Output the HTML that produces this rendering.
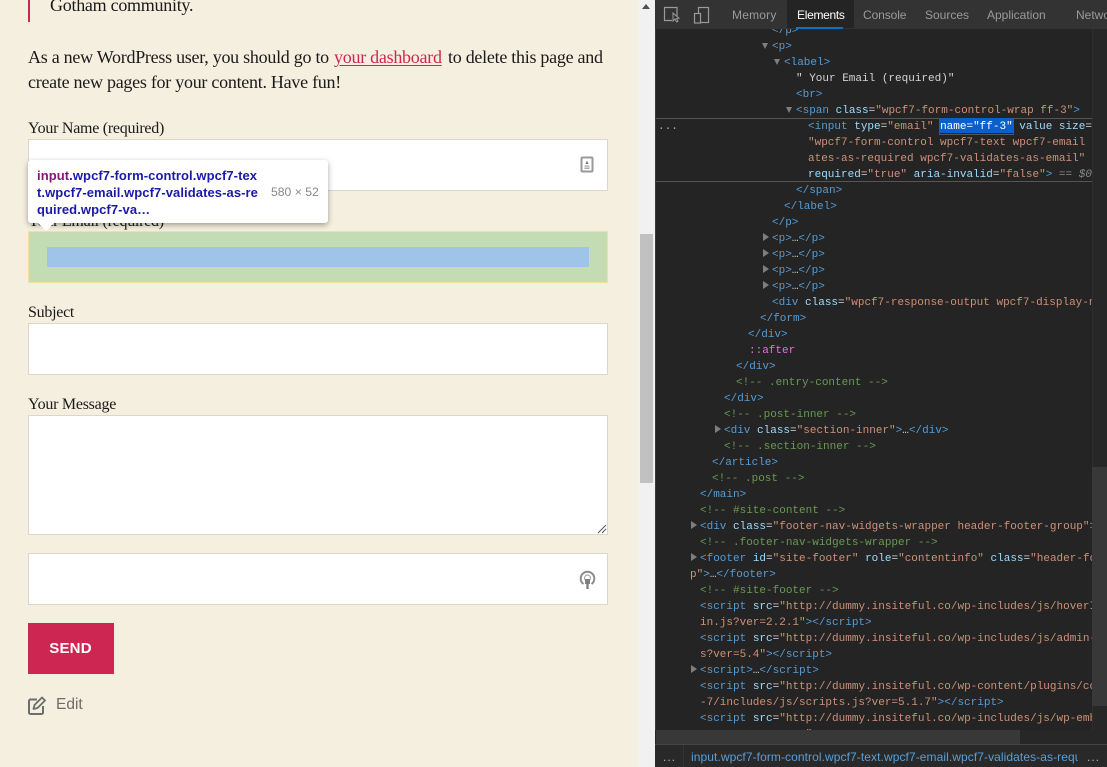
<!DOCTYPE html>
<html><head><meta charset="utf-8"><style>
html,body{margin:0;padding:0;width:1107px;height:767px;overflow:hidden;background:#f5efe0}
.a{position:absolute;white-space:pre}
.s{font-family:"Liberation Serif",serif;color:#1a1a1a;font-size:18px;line-height:24px;letter-spacing:-.27px}
.l{font-size:16px;line-height:20px;letter-spacing:-.27px}
.i{position:absolute;left:28px;width:578px;background:#fff;border:1px solid #dcd7ca}
#dt{position:absolute;left:655px;top:0;width:452px;height:767px;background:#242424;overflow:hidden}
#code{position:absolute;left:0;top:1px;width:437px;height:729px;overflow:hidden;font-family:"Liberation Mono",monospace;font-size:11px;color:#d4d4d4}
#code div{position:absolute;white-space:pre;height:16px;line-height:16px}
b{font-weight:normal}
.t{color:#569cd6}.n{color:#9cdcfe}.v{color:#ce9178}.c{color:#6a9955}
.r{position:absolute;width:0;height:0;margin-top:-1px;border-top:4px solid transparent;border-bottom:4px solid transparent;border-left:6px solid #7f7f7f}
.d{position:absolute;width:0;height:0;margin-top:-1px;border-left:3.5px solid transparent;border-right:3.5px solid transparent;border-top:6px solid #7f7f7f}
.tab{position:absolute;top:7px;font:12px/16px "Liberation Sans",sans-serif;color:#9a9a9a;white-space:pre}
</style></head><body>
<div class="a" style="left:28px;top:0;width:2px;height:22px;background:#cd2653"></div>
<div class="a s" style="left:50px;top:-7px">Gotham community.</div>
<div class="a s" style="left:28px;top:45px">As a new WordPress user, you should go to</div>
<div class="a s" style="left:334px;top:45px;color:#cd2653;text-decoration:underline;text-underline-offset:2px">your dashboard</div>
<div class="a s" style="left:448px;top:45px">to delete this page and</div>
<div class="a s" style="left:28px;top:70px">create new pages for your content. Have fun!</div>
<div class="a s l" style="left:28px;top:119px">Your Name (required)</div>
<div class="i" style="top:139px;height:50px"></div>
<svg class="a" style="left:580px;top:156px" width="14" height="17" viewBox="0 0 14 17"><rect x="1.500" y="1.500" width="11" height="14" rx="1" fill="#fff" stroke="#999" stroke-width="2"/><path d="M7 4.500l1.500 3.500h-3z" fill="#777"/><path d="M4.500 9.500h5v1.200h-5zM4.500 11.500h5v1.500h-5z" fill="#aaa"/></svg>
<div class="a s l" style="left:28px;top:212px">Your Email (required)</div>
<div class="a" style="left:28px;top:231px;width:578px;height:50px;background:#c4dcb3;border:1px solid #f3dfa6"></div>
<div class="a" style="left:47px;top:247px;width:542px;height:20px;background:#9fc4e8"></div>
<div class="a s l" style="left:28px;top:303px">Subject</div>
<div class="i" style="top:323px;height:50px"></div>
<div class="a s l" style="left:28px;top:395px">Your Message</div>
<div class="i" style="top:415px;height:118px"></div>
<svg class="a" style="left:597px;top:524px" width="10" height="10" viewBox="0 0 10 10"><path d="M1 9L9 1M5 9L9 5" stroke="#555" stroke-width="1" fill="none"/></svg>
<div class="i" style="top:553px;height:50px"></div>
<svg class="a" style="left:579px;top:569px" width="17" height="21" viewBox="0 0 17 21"><path d="M4.500 15a6.800 6.800 0 1 1 8 0" fill="none" stroke="#8c8c8c" stroke-width="2"/><circle cx="8.500" cy="9" r="3" fill="none" stroke="#aaa" stroke-width="1.200"/><rect x="6" y="10" width="5" height="5" fill="#808080"/><rect x="7.300" y="15" width="2.400" height="5" fill="#808080"/></svg>
<div class="a" style="left:28px;top:623px;width:85px;padding-right:1px;height:51px;background:#cd2653;color:#fff;font:bold 15px/52px 'Liberation Sans',sans-serif;text-align:center;letter-spacing:.2px">SEND</div>
<svg class="a" style="left:28px;top:696px" width="18" height="19" viewBox="0 0 18 19"><path d="M9 3.500H2.500A1.500 1.500 0 0 0 1 5V16.500A1.500 1.500 0 0 0 2.500 18H13.500A1.500 1.500 0 0 0 15 16.500V10" fill="none" stroke="#6d6d6d" stroke-width="2"/><path d="M14 1.500l3 3-7.500 7.500-4 1 1-4z" fill="none" stroke="#6d6d6d" stroke-width="1.800" stroke-linejoin="round"/></svg>
<div class="a" style="left:56px;top:696px;font:15.500px/18px 'Liberation Sans',sans-serif;color:#6d6d6d">Edit</div>

<div class="a" style="left:28px;top:160px;width:300px;height:63px;background:#fff;border-radius:3px;box-shadow:0 2px 6px rgba(0,0,0,.35)"></div>
<div class="a" style="left:38px;top:223px;width:0;height:0;border-left:8px solid transparent;border-right:8px solid transparent;border-top:8px solid #fff"></div>
<div class="a" style="left:37px;top:167px;font:bold 13px/17px 'Liberation Sans',sans-serif;letter-spacing:.08px;color:#1a1aa6"><span style="color:#881280">input</span>.wpcf7-form-control.wpcf7-tex
t.wpcf7-email.wpcf7-validates-as-re
quired.wpcf7-va…</div>
<div class="a" style="left:271px;top:184px;font:12.200px/17px 'Liberation Sans',sans-serif;color:#888">580 × 52</div>

<div class="a" style="left:638px;top:0;width:17px;height:767px;background:#f1f1f1"></div>
<div class="a" style="left:642px;top:4px;width:0;height:0;border-left:4px solid transparent;border-right:4px solid transparent;border-bottom:5px solid #505050"></div>
<div class="a" style="left:640px;top:234px;width:13px;height:249px;background:#c1c1c1"></div>

<div id="dt">
<div id="code">
<div style="left:117px;top:22px"><b class="t">&lt;/p&gt;</b></div>
<i class="d" style="left:107px;top:43px"></i><div style="left:117px;top:38px"><b class="t">&lt;p&gt;</b></div>
<i class="d" style="left:119px;top:59px"></i><div style="left:129px;top:54px"><b class="t">&lt;label&gt;</b></div>
<div style="left:141px;top:70px">" Your Email (required)"</div>
<div style="left:141px;top:86px"><b class="t">&lt;br&gt;</b></div>
<i class="d" style="left:131px;top:107px"></i><div style="left:141px;top:102px"><b class="t">&lt;span</b> <b class="n">class</b>=<b class="v">"wpcf7-form-control-wrap ff-3"</b><b class="t">&gt;</b></div>
<div style="left:0;top:117px;width:437px;height:64px;border-top:1px solid #555;border-bottom:1px solid #555;box-sizing:border-box"></div>
<div style="left:3px;top:118px;color:#aaa">...</div>
<div style="left:284px;top:117px;width:75px;height:17px;box-sizing:border-box;border:1px solid #555"></div>
<div style="left:285px;top:117px;width:73px;height:15px;background:#0b5fcc"></div>
<div style="left:153px;top:118px"><b class="t">&lt;input</b> <b class="n">type</b>=<b class="v">"email"</b> <b style="color:#fff">name="ff-3"</b> <b class="n">value</b> <b class="n">size</b>=</div>
<div style="left:153px;top:134px;width:279px;overflow:hidden"><b class="v">"wpcf7-form-control wpcf7-text wpcf7-email</b></div>
<div style="left:153px;top:150px"><b class="v">ates-as-required wpcf7-validates-as-email"</b></div>
<div style="left:153px;top:166px"><b class="n">required</b>=<b class="v">"true"</b> <b class="n">aria-invalid</b>=<b class="v">"false"</b><b class="t">&gt;</b> <span style="color:#8a8a8a">== <i>$0</i></span></div>
<div style="left:141px;top:182px"><b class="t">&lt;/span&gt;</b></div>
<div style="left:129px;top:198px"><b class="t">&lt;/label&gt;</b></div>
<div style="left:117px;top:214px"><b class="t">&lt;/p&gt;</b></div>
<i class="r" style="left:108px;top:233px"></i><div style="left:117px;top:230px"><b class="t">&lt;p&gt;</b>…<b class="t">&lt;/p&gt;</b></div>
<i class="r" style="left:108px;top:249px"></i><div style="left:117px;top:246px"><b class="t">&lt;p&gt;</b>…<b class="t">&lt;/p&gt;</b></div>
<i class="r" style="left:108px;top:265px"></i><div style="left:117px;top:262px"><b class="t">&lt;p&gt;</b>…<b class="t">&lt;/p&gt;</b></div>
<i class="r" style="left:108px;top:281px"></i><div style="left:117px;top:278px"><b class="t">&lt;p&gt;</b>…<b class="t">&lt;/p&gt;</b></div>
<div style="left:117px;top:294px"><b class="t">&lt;div</b> <b class="n">class</b>=<b class="v">"wpcf7-response-output wpcf7-display-none"</b></div>
<div style="left:105px;top:310px"><b class="t">&lt;/form&gt;</b></div>
<div style="left:93px;top:326px"><b class="t">&lt;/div&gt;</b></div>
<div style="left:94px;top:342px;color:#e66ce6">::after</div>
<div style="left:81px;top:358px"><b class="t">&lt;/div&gt;</b></div>
<div style="left:81px;top:374px"><b class="c">&lt;!-- .entry-content --&gt;</b></div>
<div style="left:69px;top:390px"><b class="t">&lt;/div&gt;</b></div>
<div style="left:69px;top:406px"><b class="c">&lt;!-- .post-inner --&gt;</b></div>
<i class="r" style="left:60px;top:425px"></i><div style="left:69px;top:422px"><b class="t">&lt;div</b> <b class="n">class</b>=<b class="v">"section-inner"</b><b class="t">&gt;</b>…<b class="t">&lt;/div&gt;</b></div>
<div style="left:69px;top:438px"><b class="c">&lt;!-- .section-inner --&gt;</b></div>
<div style="left:57px;top:454px"><b class="t">&lt;/article&gt;</b></div>
<div style="left:57px;top:470px"><b class="c">&lt;!-- .post --&gt;</b></div>
<div style="left:45px;top:486px"><b class="t">&lt;/main&gt;</b></div>
<div style="left:45px;top:502px"><b class="c">&lt;!-- #site-content --&gt;</b></div>
<i class="r" style="left:36px;top:521px"></i><div style="left:45px;top:518px"><b class="t">&lt;div</b> <b class="n">class</b>=<b class="v">"footer-nav-widgets-wrapper header-footer-group"</b><b class="t">&gt;</b></div>
<div style="left:45px;top:534px"><b class="c">&lt;!-- .footer-nav-widgets-wrapper --&gt;</b></div>
<i class="r" style="left:36px;top:553px"></i><div style="left:45px;top:550px"><b class="t">&lt;footer</b> <b class="n">id</b>=<b class="v">"site-footer"</b> <b class="n">role</b>=<b class="v">"contentinfo"</b> <b class="n">class</b>=<b class="v">"header-footer-grou</b></div>
<div style="left:35px;top:566px"><b class="v">p"</b><b class="t">&gt;</b>…<b class="t">&lt;/footer&gt;</b></div>
<div style="left:45px;top:582px"><b class="c">&lt;!-- #site-footer --&gt;</b></div>
<div style="left:45px;top:598px"><b class="t">&lt;script</b> <b class="n">src</b>=<b class="v">"http://dummy.insiteful.co/wp-includes/js/hoverIntent</b></div>
<div style="left:45px;top:614px"><b class="v">in.js?ver=2.2.1"</b><b class="t">&gt;&lt;/script&gt;</b></div>
<div style="left:45px;top:630px"><b class="t">&lt;script</b> <b class="n">src</b>=<b class="v">"http://dummy.insiteful.co/wp-includes/js/admin-bar</b></div>
<div style="left:45px;top:646px"><b class="v">s?ver=5.4"</b><b class="t">&gt;&lt;/script&gt;</b></div>
<i class="r" style="left:36px;top:665px"></i><div style="left:45px;top:662px"><b class="t">&lt;script&gt;</b>…<b class="t">&lt;/script&gt;</b></div>
<div style="left:45px;top:678px"><b class="t">&lt;script</b> <b class="n">src</b>=<b class="v">"http://dummy.insiteful.co/wp-content/plugins/contact</b></div>
<div style="left:45px;top:694px"><b class="v">-7/includes/js/scripts.js?ver=5.1.7"</b><b class="t">&gt;&lt;/script&gt;</b></div>
<div style="left:45px;top:710px"><b class="t">&lt;script</b> <b class="n">src</b>=<b class="v">"http://dummy.insiteful.co/wp-includes/js/wp-embed</b></div>
<div style="left:45px;top:726px"><b class="v">                "</b></div>
</div>
<div class="a" style="left:0;top:0;width:1px;height:767px;background:#3a3a3a"></div>
<div class="a" style="left:437px;top:29px;width:15px;height:701px;background:#272727;border-left:1px solid #2e2e2e;box-sizing:border-box"></div>
<div class="a" style="left:437px;top:467px;width:15px;height:239px;background:#383838"></div>
<div class="a" style="left:0;top:730px;width:452px;height:15px;background:#272727"></div>
<div class="a" style="left:1px;top:730px;width:364px;height:14px;background:#383838"></div>
<div class="a" style="left:0;top:744px;width:452px;height:1px;background:#444"></div>
<div class="a" style="left:0;top:745px;width:452px;height:22px;background:#292929"></div>
<div class="a" style="left:8px;top:749px;font:12px/16px 'Liberation Sans',sans-serif;color:#b0b0b0;letter-spacing:1px">...</div>
<div class="a" style="left:28px;top:745px;width:1px;height:22px;background:#333"></div>
<div class="a" style="left:36px;top:749px;width:387px;overflow:hidden;font:12px/16px 'Liberation Sans',sans-serif;letter-spacing:.08px;color:#5a9fd8">input.wpcf7-form-control.wpcf7-text.wpcf7-email.wpcf7-validates-as-required</div>
<div class="a" style="left:432px;top:749px;font:12px/16px 'Liberation Sans',sans-serif;color:#b0b0b0;letter-spacing:1px">...</div>

<div class="a" style="left:0;top:0;width:452px;height:29px;background:#333"></div>
<div class="a" style="left:132px;top:0;width:67px;height:28px;background:#242424"></div>
<div class="a" style="left:141px;top:27px;width:47px;height:2px;background:#0a72c9"></div>
<svg class="a" style="left:8px;top:5px" width="62" height="20" viewBox="0 0 62 20"><path d="M14 11V2.500H1.500V15.500H9" fill="none" stroke="#9a9a9a" stroke-width="1.200"/><path d="M10 8l0 8 2-2 1.500 3 1.500-.8-1.500-2.700 2.500-.3z" fill="none" stroke="#9a9a9a"/><rect x="35.500" y="2.500" width="10" height="15" fill="none" stroke="#9a9a9a" stroke-width="1.200"/><rect x="31.500" y="8.500" width="6" height="9.500" fill="#333" stroke="#9a9a9a" stroke-width="1.200"/></svg>
<div class="tab" style="left:77px;letter-spacing:.2px">Memory</div>
<div class="tab" style="left:142px;color:#fff;letter-spacing:-.3px">Elements</div>
<div class="tab" style="left:208px;letter-spacing:-.1px">Console</div>
<div class="tab" style="left:270px">Sources</div>
<div class="tab" style="left:332px">Application</div>
<div class="tab" style="left:421px">Network</div>
</div>
</body></html>
